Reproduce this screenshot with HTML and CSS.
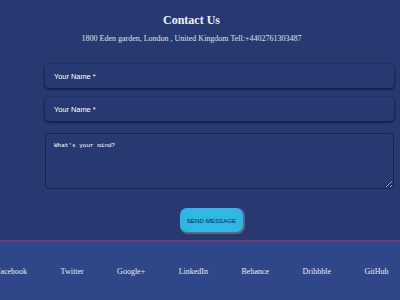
FILE: index.html
```html
<!DOCTYPE html>
<html>
<head>
<meta charset="utf-8">
<link rel="stylesheet" href="styles.css">
</head>
<body>
<section class="contact">
  <h1 class="title">Contact Us</h1>
  <p class="address">1800 Eden garden, London , United Kingdom Tell:+4402761303487</p>
  <form class="form">
    <input class="field" type="text" placeholder="Your Name *">
    <input class="field" type="text" placeholder="Your Name *">
    <textarea class="message" placeholder="What's your mind?"></textarea>
    <div class="actions"><button class="send" type="button">SEND MESSAGE</button></div>
  </form>
</section>
<footer class="footer">
  <nav class="links">
    <a class="link">Facebook</a>
    <a class="link">Twitter</a>
    <a class="link">Google+</a>
    <a class="link">LinkedIn</a>
    <a class="link">Behance</a>
    <a class="link">Dribbble</a>
    <a class="link">GitHub</a>
  </nav>
</footer>
</body>
</html>
```
FILE: styles.css
```css
html, body {
  margin: 0;
  padding: 0;
  height: 300px;
  overflow: hidden;
}
body {
  background: #283971;
  font-family: "Liberation Serif", "Times New Roman", serif;
  color: #e8eaf2;
  display: flex;
  flex-direction: column;
}
.contact {
  padding-top: 13px;
  height: 240px;
  box-sizing: border-box;
}
.title {
  margin: 0;
  width: 383px;
  text-align: center;
  font-size: 12px;
  line-height: 14px;
  font-weight: bold;
  color: #eef0f6;
}
.address {
  margin: 7px 0 0;
  width: 383px;
  text-align: center;
  font-size: 8px;
  line-height: 10px;
  color: #dfe2ee;
}
.form {
  margin: 20px 6px 0 45px;
  display: flex;
  flex-direction: column;
}
.field {
  height: 24px;
  box-sizing: border-box;
  border: none;
  border-radius: 4px;
  background: #283971;
  box-shadow: 0 1px 2px 1px rgba(8, 14, 40, 0.55);
  padding: 0 9px;
  font-family: "Liberation Sans", Arial, sans-serif;
  font-size: 7.4px;
  color: #fff;
  outline: none;
  margin-bottom: 9px;
}
.field::placeholder {
  color: #ffffff;
  opacity: 1;
}
.message {
  margin-top: 3px;
  height: 56px;
  box-sizing: border-box;
  border: 1.5px solid #19244f;
  border-radius: 4px;
  background: #283971;
  padding: 8px 8px;
  font-family: "Liberation Mono", "Courier New", monospace;
  font-size: 6px;
  color: #fff;
  resize: vertical;
  outline: none;
}
.message::placeholder {
  color: #ffffff;
  opacity: 1;
}
.actions {
  margin-top: 19px;
  padding-left: 135px;
  display: flex;
}
.send {
  width: 63px;
  height: 24px;
  border: none;
  border-radius: 7px;
  background: #2db7e6;
  box-shadow: 1px 1px 1px 1px rgba(110, 110, 130, 0.85);
  font-family: "Liberation Sans", Arial, sans-serif;
  font-size: 6.2px;
  color: #16254d;
  padding: 0;
}
.footer {
  flex: 1;
  background: #2f4788;
  border-top: 2px solid #6c3c7e;
}
.links {
  display: flex;
  gap: 33.5px;
  margin-left: -4px;
  padding-top: 25px;
  white-space: nowrap;
}
.link {
  font-size: 8px;
  line-height: 10px;
  color: #e8eaf2;
}
```
